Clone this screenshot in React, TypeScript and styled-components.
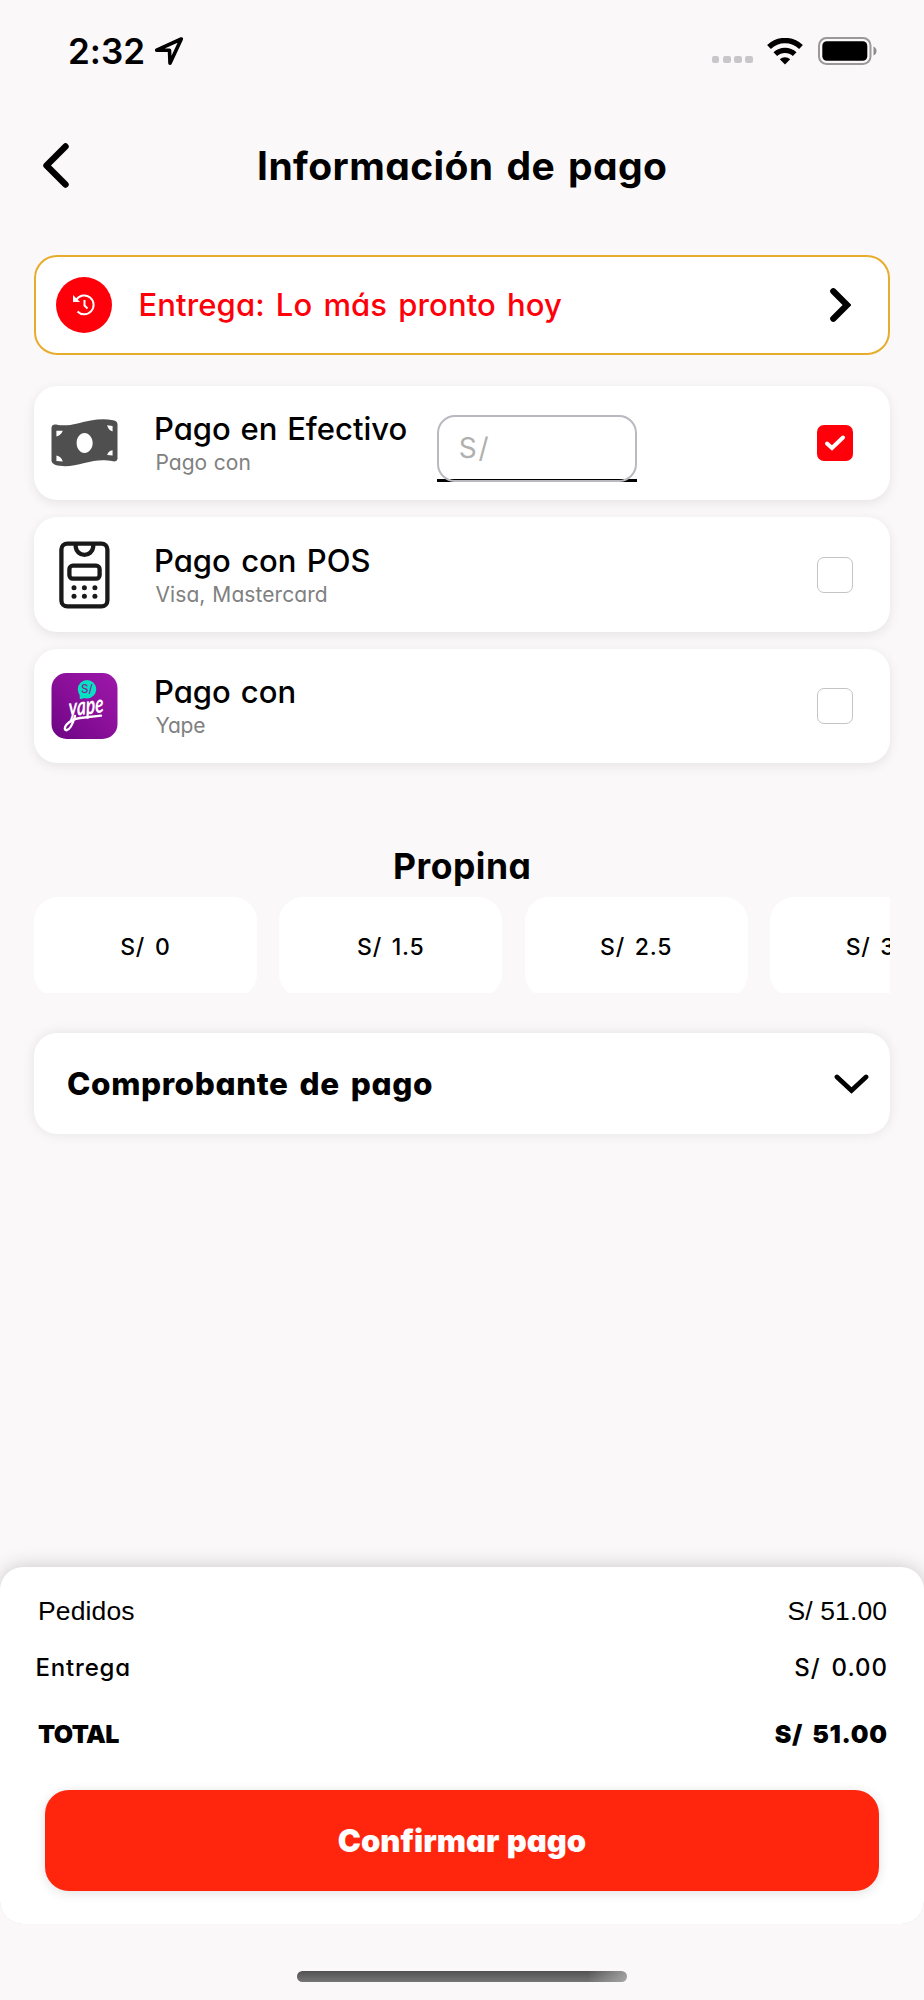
import React from "react";
import styled, { createGlobalStyle } from "styled-components";

const GlobalStyle = createGlobalStyle`
  * { box-sizing: border-box; }
  body {
    margin: 0;
    background: #faf8f9;
    color: #000;
    font-family: Inter, "Liberation Sans", sans-serif;
    font-feature-settings: "cv11", "calt" 0;
  }
`;

const Screen = styled.div`
  width: 924px;
  height: 2000px;
  display: flex;
  flex-direction: column;
  overflow: hidden;
  background: #faf8f9;
`;

interface TxtProps {
  $size: number;
  $weight?: number;
  $ls?: number;
  $ws?: number;
  $color?: string;
  $lh?: number;
  $family?: string;
}

const Txt = styled.span<TxtProps>`
  font-size: ${p => p.$size}px;
  font-weight: ${p => p.$weight ?? 500};
  letter-spacing: ${p => p.$ls ?? 0}px;
  word-spacing: ${p => p.$ws ?? 0}px;
  margin-right: ${p => -(p.$ls ?? 0)}px;
  color: ${p => p.$color ?? "#000"};
  line-height: ${p => p.$lh ?? 40}px;
  ${p => (p.$family ? `font-family: ${p.$family};` : "")}
  white-space: nowrap;
`;

const Subtitle = styled(Txt)`
  padding-left: 1.5px;
`;

const StatusBar = styled.header`
  height: 102px;
  flex: none;
  display: flex;
  align-items: center;
  padding: 0 46px 0 68px;
`;
const Spacer = styled.div`
  flex: 1;
`;
const LocationArrow = styled.svg`
  margin-left: 9px;
`;
const Signal = styled.div`
  display: flex;
  gap: 3.6px;
  padding-top: 17px;
  margin-right: 14px;
`;
const SignalDot = styled.i`
  width: 7.6px;
  height: 7.2px;
  border-radius: 2.2px;
  background: #c8c6c8;
`;
const Battery = styled.svg`
  margin-left: 15px;
`;

const TitleBar = styled.div`
  height: 128px;
  flex: none;
  display: grid;
  grid-template-columns: 120px 1fr 120px;
  align-items: center;
`;
const BackIcon = styled.svg`
  margin-left: 42px;
`;
const Title = styled.div`
  text-align: center;
  height: 40px;
`;

const Content = styled.main`
  flex: none;
  height: 1337px;
  padding: 24.5px 34px 0;
`;

const Card = styled.section<{ $h: number }>`
  height: ${p => p.$h}px;
  border-radius: 23px;
  background: #fff;
  display: flex;
  align-items: center;
  box-shadow: 0 3px 12px rgba(0, 0, 0, 0.085);
`;
const DeliveryCard = styled(Card)`
  border: 2px solid #e8ac2c;
  box-shadow: none;
  padding: 0 37px 0 20px;
`;
const Badge = styled.div`
  width: 56px;
  height: 56px;
  border-radius: 50%;
  background: #ff000a;
  display: grid;
  place-items: center;
  margin-right: 26.5px;
`;
const Methods = styled.div`
  margin-top: 30.8px;
  display: flex;
  flex-direction: column;
  gap: 17.5px;
`;
const MethodCard = styled(Card)`
  padding: 0 37.5px 0 17px;
`;
const IconSlot = styled.div`
  width: 67px;
  display: flex;
  justify-content: center;
  margin-right: 36px;
`;
const Labels = styled.div`
  display: flex;
  flex-direction: column;
  align-items: flex-start;
  padding-top: 3px;
`;
const Amount = styled.div`
  width: 200px;
  height: 67px;
  margin: 12px 0 0 29.5px;
  box-shadow: inset 0 -3px #000;
`;
const AmountField = styled.div`
  height: 100%;
  border: 2px solid #b9b9c0;
  border-radius: 18px;
  padding: 11px 0 0 20px;
`;
const Checkbox = styled.div<{ $on?: boolean }>`
  width: 36px;
  height: 36px;
  border-radius: 7px;
  display: grid;
  place-items: center;
  background: ${p => (p.$on ? "#ff000a" : "#fff")};
  border: ${p => (p.$on ? "none" : "1px solid #c4c4c2")};
`;

const TipTitle = styled.h2`
  margin: 83.4px 0 0;
  height: 50px;
  text-align: center;
`;
const Tips = styled.div`
  display: flex;
  gap: 22.4px;
  height: 96.5px;
  overflow: hidden;
`;
const Tip = styled.div`
  flex: none;
  width: 223px;
  height: 101px;
  border-radius: 24px;
  background: #fff;
  display: flex;
  justify-content: center;
  align-items: center;
  padding-right: 1px;
`;
const ReceiptCard = styled(Card)`
  margin-top: 40px;
  padding: 0 21px 0 33px;
  justify-content: space-between;
  box-shadow: 0 0 13px rgba(0, 0, 0, 0.09);
`;

const Sheet = styled.footer`
  height: 357px;
  flex: none;
  background: #fff;
  border-radius: 23px;
  box-shadow: 0 0 20px rgba(0, 0, 0, 0.2);
  clip-path: inset(-40px 0 0 0 round 23px);
  padding: 15px 37px 0 38px;
  display: flex;
  flex-direction: column;
`;
const Row = styled.div<{ $h: number; $shift?: number }>`
  height: ${p => p.$h}px;
  flex: none;
  display: flex;
  align-items: center;
  justify-content: space-between;
  margin-left: ${p => p.$shift ?? 0}px;
`;
const Confirm = styled.button`
  margin: 18px 8px 0 7px;
  height: 101px;
  flex: none;
  border: 0;
  border-radius: 24px;
  background: #ff260d;
  box-shadow: 0 2px 12px rgba(0, 0, 0, 0.12);
  font-family: inherit;
  font-feature-settings: inherit;
`;
const HomeBar = styled.div`
  width: 330px;
  height: 11px;
  margin: 47px auto 0;
  border-radius: 6px;
  background: linear-gradient(90deg, transparent 88%, rgba(200, 200, 200, 0.6)), linear-gradient(#525252, #757575);
`;

const MoneyIcon = () => (
  <svg width="67" height="48" viewBox="0 0 68 48" preserveAspectRatio="none">
    <path
      fill="#4f4f4f"
      fillRule="evenodd"
      d="M5 5.500C12 7 18 6.500 27 4.500C40 1.500 50-1 63 1.200Q67.300 2 67.500 5V40Q67 43 63 42.300C52 40 44 41.500 34 44C23 47 13 48.500 4 45.800Q.8 44.500.5 42V8.500Q1 5 5 5.500ZM34 14C29.500 14 26 18.500 26 24S29.500 34 34 34 42.300 29.500 42.300 24 38.500 14 34 14ZM5.500 11.800V17.500Q10 16.500 12 11.800ZM5.500 36.500V42L12 42.500Q10.500 37.500 5.500 36.500ZM57 6.200Q58 11 62.500 12.500V7ZM62.500 31.200Q58 32 57 36L62.500 36.500Z"
    />
  </svg>
);

const PosIcon = () => (
  <svg width="51" height="68" viewBox="0 0 51 68" fill="none" stroke="#191919" strokeWidth="4.300">
    <rect x="2.400" y="2.600" width="46" height="62.800" rx="6" />
    <path d="M16.700 3V6A8.800 8.800 0 0 0 34.200 6V3" />
    <rect x="10.400" y="24.700" width="30.200" height="13" rx="3.500" />
    <g fill="#191919" stroke="none">
      {[15, 25.4, 35.9].map(x => [46.8, 55.2].map(y => <circle key={`${x}-${y}`} cx={x} cy={y} r="2.500" />))}
    </g>
  </svg>
);

const YapeIcon = () => (
  <svg width="67" height="66" viewBox="0 0 67 66">
    <defs>
      <linearGradient id="yapeBg" x1="0" y1="1" x2="1" y2="0">
        <stop offset="0" stopColor="#6c0583" />
        <stop offset="0.5" stopColor="#8a0f99" />
        <stop offset="1" stopColor="#9d18aa" />
      </linearGradient>
    </defs>
    <rect x="0.500" width="66" height="66" rx="15" fill="url(#yapeBg)" />
    <circle cx="36" cy="16.200" r="9.200" fill="#08e0c4" />
    <path d="M28.500 19L28.800 26.300L36 24.500Z" fill="#08e0c4" />
    <text x="30" y="20.300" fontFamily="Inter" fontSize="11.500" fontWeight="500" fill="#7a2c9a">S/</text>
    <text
      transform="translate(18 43.500) rotate(-7) skewX(-4) scale(.7 1)"
      fontFamily="Lato"
      fontStyle="italic"
      fontSize="25"
      fontWeight="700"
      fill="#fff"
    >
      yape
    </text>
    <path
      d="M24 43C22 50 19 57 15.500 57.200C11 56.500 16 47 29 45L50 42.600"
      fill="none"
      stroke="#fff"
      strokeWidth="2.400"
      strokeLinecap="round"
    />
  </svg>
);

const tips = ["S/ 0", "S/ 1.5", "S/ 2.5", "S/ 3.5"];

export default function App() {
  return (
    <>
      <GlobalStyle />
      <Screen>
        <StatusBar>
          <Txt $size={35} $weight={600}>2:32</Txt>
          <LocationArrow width="30" height="30" viewBox="0 0 30 30" fill="none" stroke="#000" strokeWidth="3.600" strokeLinejoin="round">
            <path d="M27.300 3L2.700 14.200H15.500L16 27.300Z" />
          </LocationArrow>
          <Spacer />
          <Signal>
            <SignalDot />
            <SignalDot />
            <SignalDot />
            <SignalDot />
          </Signal>
          <svg width="36" height="27" viewBox="0 0 36 27" fill="none" stroke="#000">
            <path d="M2 9A23 23 0 0 1 34 9" strokeWidth="5.400" />
            <path d="M8.300 16.200A14 14 0 0 1 27.700 16.200" strokeWidth="5.200" />
            <path d="M18 26.500L12.800 21.300A7.500 7.500 0 0 1 23.200 21.300Z" fill="#000" stroke="none" />
          </svg>
          <Battery width="60" height="28" viewBox="0 0 60 28">
            <rect x="1" y="1" width="51.500" height="26" rx="7.500" fill="none" stroke="#9a989a" strokeWidth="2" />
            <rect x="4.300" y="4.300" width="45" height="19.400" rx="4.500" />
            <path d="M55.500 9.500Q58.500 11 58.500 14T55.500 18.500Z" fill="#8e8c8e" />
          </Battery>
        </StatusBar>

        <TitleBar>
          <BackIcon width="28" height="46" viewBox="0 0 28 46" fill="none" stroke="#000" strokeWidth="6.400" strokeLinecap="round" strokeLinejoin="round">
            <path d="M23.500 3.500L4.500 22.500L23.500 41.500" />
          </BackIcon>
          <Title>
            <Txt $size={39} $weight={700} $ls={0.42} $ws={3.2}>Información de pago</Txt>
          </Title>
        </TitleBar>

        <Content>
          <DeliveryCard $h={100.5}>
            <Badge>
              <svg width="24" height="24" viewBox="0 0 24 24" fill="none" stroke="#fff" strokeWidth="2">
                <path d="M4.500 6.500A9.400 9.400 0 1 1 5.500 18.500M12.500 7V12.500L15.500 15.500" />
                <path d="M1 2V9H8Z" fill="#fff" stroke="none" />
              </svg>
            </Badge>
            <Txt $size={31} $ls={0.12} $ws={2.7} $color="#ff000a">Entrega: Lo más pronto hoy</Txt>
            <Spacer />
            <svg width="21" height="34" viewBox="0 0 21 34" fill="none" stroke="#000" strokeWidth="6.200" strokeLinecap="round">
              <path d="M3.300 3.300L17 17L3.300 30.700" />
            </svg>
          </DeliveryCard>

          <Methods>
            <MethodCard $h={114.2}>
              <IconSlot><MoneyIcon /></IconSlot>
              <Labels>
                <Txt $size={31} $lh={36} $ws={1.5}>Pago en Efectivo</Txt>
                <Subtitle $size={21} $weight={400} $lh={31} $ws={0.8} $color="#808080">Pago con</Subtitle>
              </Labels>
              <Amount>
                <AmountField>
                  <Txt $size={28} $weight={400} $ls={1.7} $color="#b0b0b0">S/</Txt>
                </AmountField>
              </Amount>
              <Spacer />
              <Checkbox $on>
                <svg width="22" height="18" viewBox="0 0 22 18" fill="none" stroke="#fff" strokeWidth="4" strokeLinecap="round">
                  <path d="M3 9.500L8 14L19 3.500" />
                </svg>
              </Checkbox>
            </MethodCard>
            <MethodCard $h={114.2}>
              <IconSlot><PosIcon /></IconSlot>
              <Labels>
                <Txt $size={31} $lh={36} $ws={2.1}>Pago con POS</Txt>
                <Subtitle $size={21} $weight={400} $lh={31} $ls={0.08} $ws={0.9} $color="#808080">Visa, Mastercard</Subtitle>
              </Labels>
              <Spacer />
              <Checkbox />
            </MethodCard>
            <MethodCard $h={114.2}>
              <IconSlot><YapeIcon /></IconSlot>
              <Labels>
                <Txt $size={31} $lh={36} $ws={1.8}>Pago con</Txt>
                <Subtitle $size={21} $weight={400} $lh={31} $ls={-0.2} $color="#808080">Yape</Subtitle>
              </Labels>
              <Spacer />
              <Checkbox />
            </MethodCard>
          </Methods>

          <TipTitle>
            <Txt $size={35.5} $weight={700} $ls={0.5}>Propina</Txt>
          </TipTitle>
          <Tips>
            {tips.map(t => (
              <Tip key={t}>
                <Txt $size={23} $ls={0.75} $ws={3}>{t}</Txt>
              </Tip>
            ))}
          </Tips>

          <ReceiptCard $h={101}>
            <Txt $size={31.5} $weight={800} $ls={0.61} $ws={3.5}>Comprobante de pago</Txt>
            <svg width="35" height="20" viewBox="0 0 35 20" fill="none" stroke="#000" strokeWidth="4.800" strokeLinecap="round">
              <path d="M3 3L17.500 16.500L32 3" />
            </svg>
          </ReceiptCard>
        </Content>

        <Sheet>
          <Row $h={57}>
            <Txt $size={26.5} $weight={400} $ls={0.12} $family='"Liberation Sans", sans-serif'>Pedidos</Txt>
            <Txt $size={26.5} $weight={400} $ls={0.1} $family='"Liberation Sans", sans-serif'>S/ 51.00</Txt>
          </Row>
          <Row $h={57} $shift={-2.5}>
            <Txt $size={24} $ls={0.82}>Entrega</Txt>
            <Txt $size={24} $ls={1} $ws={3.6}>S/ 0.00</Txt>
          </Row>
          <Row $h={76}>
            <Txt $size={25} $weight={900} $ls={-0.6}>TOTAL</Txt>
            <Txt $size={25} $weight={900} $ls={0.7} $ws={3.5}>S/ 51.00</Txt>
          </Row>
          <Confirm>
            <Txt $size={31} $weight={900} $ws={1.2} $color="#fff">Confirmar pago</Txt>
          </Confirm>
        </Sheet>
        <HomeBar />
      </Screen>
    </>
  );
}
